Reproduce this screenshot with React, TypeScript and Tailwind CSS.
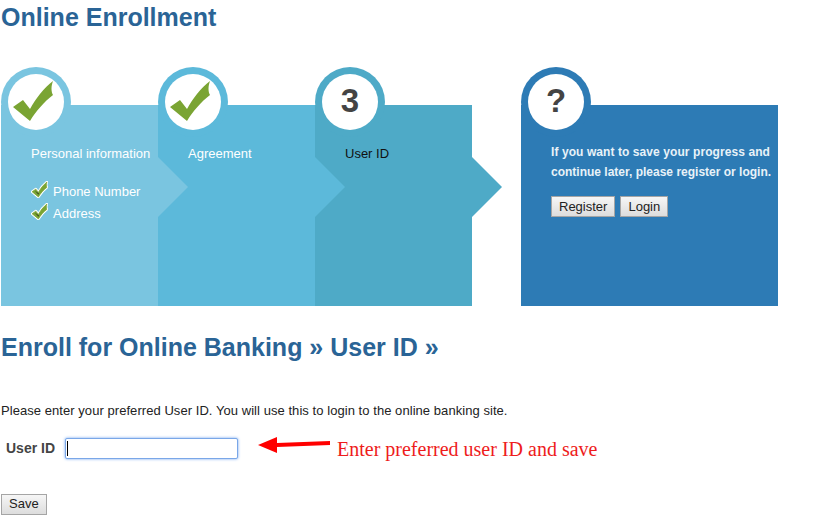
import React from 'react';

const CHECK = 'M5 33 L15 26 L22 35 C28 24 36 14 45 7 C43 12 43 18 45 21 C36 28 28 37 22 47 Z';

const BigCheck = () => (
  <svg width="56" height="56" viewBox="0 0 56 56">
    <path d={CHECK} fill="#7aa433" />
  </svg>
);

const SmallCheck = () => (
  <svg width="17" height="17" viewBox="2 4 46 46" className="shrink-0 -mt-[6px]">
    <path d={CHECK} fill="#ffffff" stroke="#ffffff" strokeWidth="7" strokeLinejoin="round" />
    <path d={CHECK} fill="#7aa433" stroke="#7aa433" strokeWidth="2" />
    <path d="M12 30 L22 41 L24 38 Z" fill="#3d4a22" />
  </svg>
);

const Circle = ({ ring, children }: { ring: string; children: React.ReactNode }) => (
  <div className={`absolute -top-[38px] left-0 w-[70px] h-[70px] rounded-full flex items-center justify-center ${ring}`}>
    <div className="w-[56px] h-[56px] rounded-full bg-white flex items-center justify-center text-[33px] font-bold text-[#444444] leading-none">
      {children}
    </div>
  </div>
);

const Glyph = ({ children }: { children: React.ReactNode }) => <span className="pb-[3px]">{children}</span>;

const Chevron = ({ fill }: { fill: string }) => (
  <svg width="30" height="60" viewBox="0 0 30 60" className="absolute z-10 top-[52px] left-[157px]">
    <path d="M0 0 L30 30 L0 60 Z" fill={fill} />
  </svg>
);

const Step = ({ bg, fill, children, icon, z }: { bg: string; fill: string; children: React.ReactNode; icon: React.ReactNode; z: string }) => (
  <div className={`relative w-[157px] h-[201px] ${bg} ${z}`}>
    <Circle ring={bg}>{icon}</Circle>
    <Chevron fill={fill} />
    <div className="pt-[40px] pl-[30px] text-[13px] leading-[18px] text-white whitespace-nowrap">{children}</div>
  </div>
);

const Btn = ({ children }: { children: React.ReactNode }) => (
  <button className="h-[21px] px-[7px] border border-[#a5a5a5] bg-gradient-to-b from-[#f6f6f6] to-[#dddddd] text-[13px] leading-[18px] text-[#222222]">
    {children}
  </button>
);

export default function App() {
  return (
    <div className="w-[829px] h-[532px] bg-white overflow-hidden font-['Liberation_Sans',Arial,sans-serif]">
      <h1 className="pl-px pt-[3px] text-[25px] leading-[29px] font-bold text-[#2a6496]">Online Enrollment</h1>

      <div className="flex pl-px mt-[73px]">
        <Step bg="bg-[#7ac5e0]" fill="#7ac5e0" z="z-30" icon={<BigCheck />}>
          <div>Personal information</div>
          <div className="mt-[18px] flex items-center h-[22px]">
            <SmallCheck />
            <span className="ml-[5px]">Phone Number</span>
          </div>
          <div className="flex items-center h-[22px]">
            <SmallCheck />
            <span className="ml-[5px]">Address</span>
          </div>
        </Step>
        <Step bg="bg-[#5cb9da]" fill="#5cb9da" z="z-20" icon={<BigCheck />}>
          <div>Agreement</div>
        </Step>
        <Step bg="bg-[#4eaac7]" fill="#4eaac7" z="z-10" icon={<Glyph>3</Glyph>}>
          <div className="text-[#111111]">User ID</div>
        </Step>
        <div className="relative ml-[49px] w-[257px] h-[201px] bg-[#2d7bb5]">
          <Circle ring="bg-[#2d7bb5]"><Glyph>?</Glyph></Circle>
          <div className="pt-[37px] pl-[30px] text-[12px] leading-[20px] font-bold text-[#e8f2f8] whitespace-nowrap">
            <div className="tracking-[0.08px]">If you want to save your progress and</div>
            <div>continue later, please register or login.</div>
          </div>
          <div className="flex gap-[5px] pl-[30px] mt-[14px]">
            <Btn>Register</Btn>
            <Btn>Login</Btn>
          </div>
        </div>
      </div>

      <h2 className="pl-px mt-[25px] text-[25px] leading-[32px] font-bold text-[#2a6496]">Enroll for Online Banking » User ID »</h2>

      <p className="pl-px mt-[39px] text-[13px] leading-[18px] text-[#222222] tracking-[0.055px]">
        Please enter your preferred User ID. You will use this to login to the online banking site.
      </p>

      <div className="flex items-center mt-[18px] pl-[6px] h-[21px]">
        <label className="w-[59px] text-[14px] font-bold text-[#444444]">User ID</label>
        <div className="relative">
          <input className="block w-[173px] h-[21px] border border-[#7aa7e8] rounded-[2px] bg-white outline-none shadow-[0_0_3px_#6ea3ee]" />
          <span className="absolute left-[2px] top-[3px] w-px h-[15px] bg-black" />
        </div>
        <svg width="73" height="17" viewBox="0 0 73 17" className="ml-[20px] self-start -mt-px">
          <path d="M0 8 L19 0 L19 6 L72 4 L72 8 L19 10 L19 16 Z" fill="#ff0000" />
        </svg>
        <span className="ml-[6px] font-['Liberation_Serif',serif] text-[20px] text-[#ee1c1c] whitespace-nowrap">
          Enter preferred user ID and save
        </span>
      </div>

      <div className="pl-px mt-[32px]">
        <Btn>Save</Btn>
      </div>
    </div>
  );
}
